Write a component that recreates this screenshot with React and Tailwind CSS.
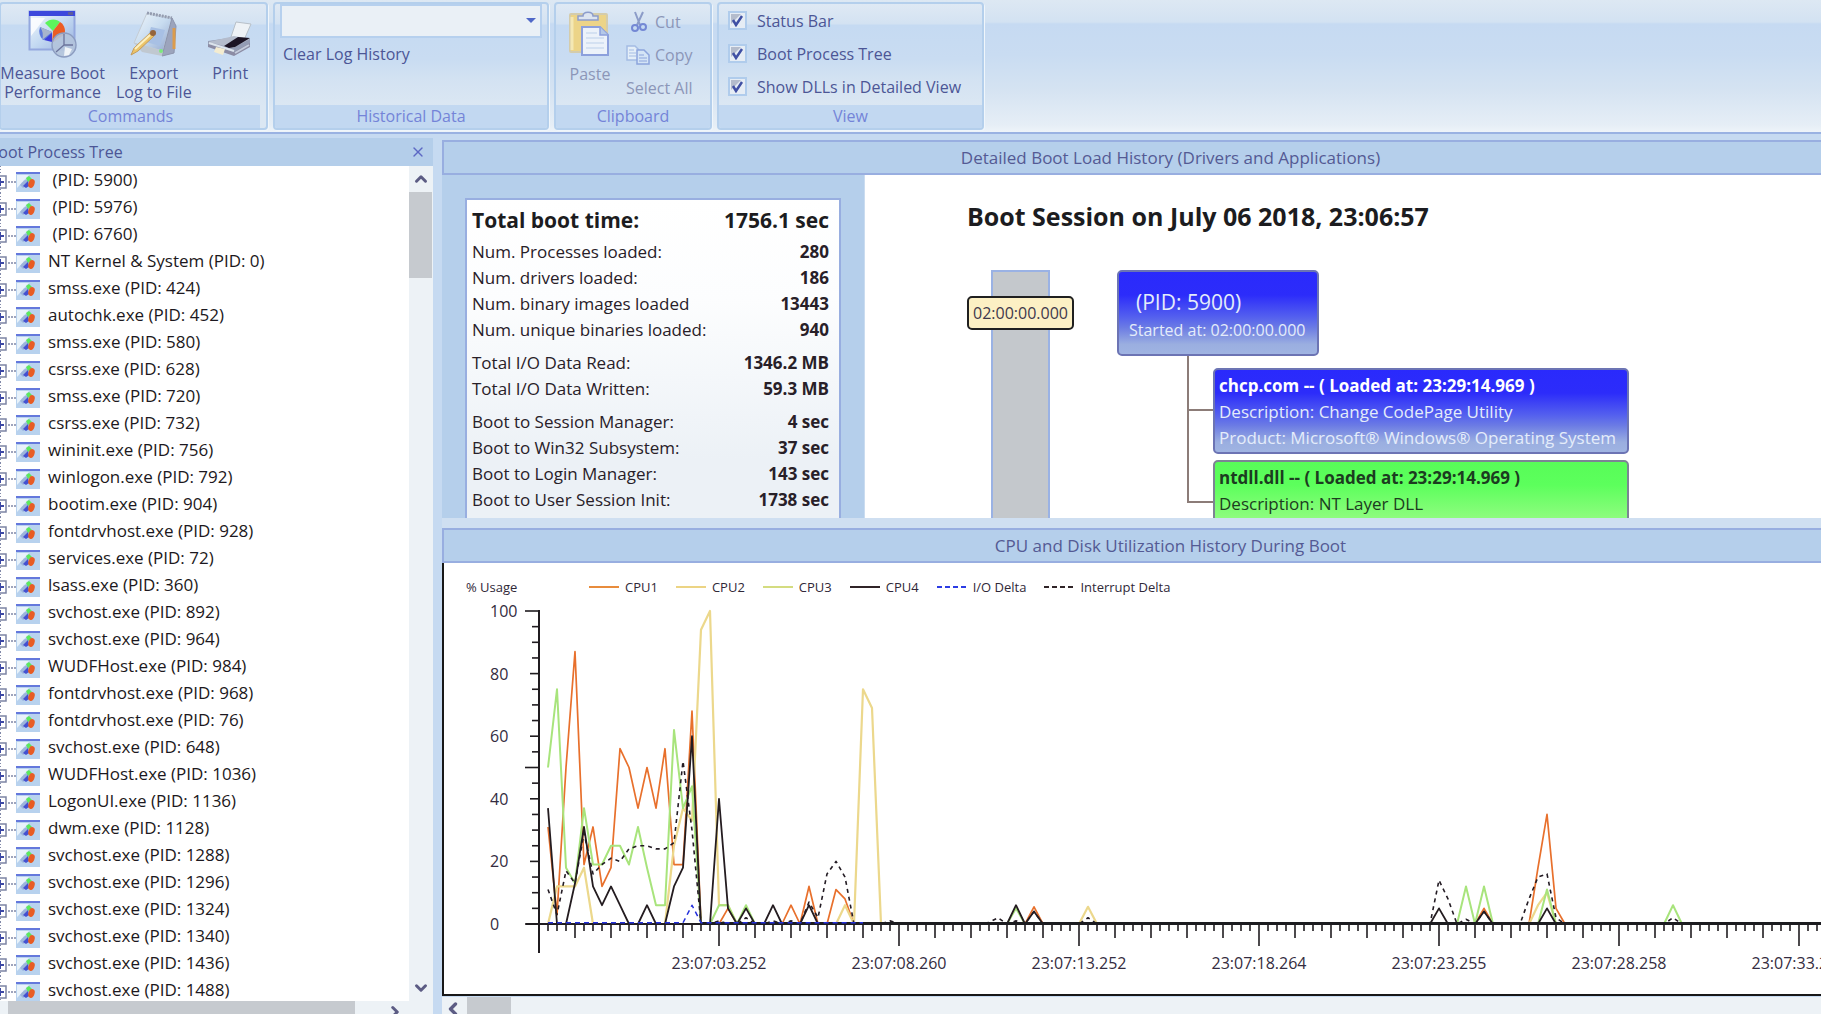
import React from "react";
import { X, ChevronUp, ChevronDown, ChevronLeft, ChevronRight } from "lucide-react";

const processes = [
  "\u00a0(PID: 5900)", "\u00a0(PID: 5976)", "\u00a0(PID: 6760)", "NT Kernel & System (PID: 0)",
  "smss.exe (PID: 424)", "autochk.exe (PID: 452)", "smss.exe (PID: 580)", "csrss.exe (PID: 628)",
  "smss.exe (PID: 720)", "csrss.exe (PID: 732)", "wininit.exe (PID: 756)", "winlogon.exe (PID: 792)",
  "bootim.exe (PID: 904)", "fontdrvhost.exe (PID: 928)", "services.exe (PID: 72)", "lsass.exe (PID: 360)",
  "svchost.exe (PID: 892)", "svchost.exe (PID: 964)", "WUDFHost.exe (PID: 984)", "fontdrvhost.exe (PID: 968)",
  "fontdrvhost.exe (PID: 76)", "svchost.exe (PID: 648)", "WUDFHost.exe (PID: 1036)", "LogonUI.exe (PID: 1136)",
  "dwm.exe (PID: 1128)", "svchost.exe (PID: 1288)", "svchost.exe (PID: 1296)", "svchost.exe (PID: 1324)",
  "svchost.exe (PID: 1340)", "svchost.exe (PID: 1436)", "svchost.exe (PID: 1488)",
];

const statGroups = [
  [
    ["Num. Processes loaded:", "280"],
    ["Num. drivers loaded:", "186"],
    ["Num. binary images loaded", "13443"],
    ["Num. unique binaries loaded:", "940"],
  ],
  [
    ["Total I/O Data Read:", "1346.2 MB"],
    ["Total I/O Data Written:", "59.3 MB"],
  ],
  [
    ["Boot to Session Manager:", "4 sec"],
    ["Boot to Win32 Subsystem:", "37 sec"],
    ["Boot to Login Manager:", "143 sec"],
    ["Boot to User Session Init:", "1738 sec"],
  ],
];

/* ---------- icons ---------- */

function MeasureIcon() {
  return (
    <svg width="50" height="50" viewBox="0 0 50 50" aria-hidden="true">
      <defs>
        <linearGradient id="mWin" x1="0" y1="0" x2="1" y2="1">
          <stop offset="0" stopColor="#f4f8fc" />
          <stop offset="0.5" stopColor="#c4daf2" />
          <stop offset="1" stopColor="#98b0e0" />
        </linearGradient>
      </defs>
      <rect x="1.5" y="1.5" width="45" height="38" fill="url(#mWin)" stroke="#94a8de" strokeWidth="2" />
      <rect x="1" y="1" width="46" height="5" fill="#3c48dc" />
      <rect x="40" y="2" width="5" height="3" fill="#5c5c9c" />
      <path d="M3 8h14L3 26z" fill="#fff" opacity="0.8" />
      <path d="M24 22L12 17a13 13 0 0 0 3 13l9-3z" fill="#5c78dc" />
      <path d="M24 22L12 17a14 14 0 0 1 2 13z" fill="#a8b4cc" />
      <path d="M25 21L17 13c5-5 12-4 15-1z" fill="#5cf45c" />
      <path d="M25 21l7-9c5 3 6 9 4 13l-12 8z" fill="#ec5c24" />
      <path d="M24 23v9l-8-2z" fill="#3c3cdc" />
      <circle cx="36" cy="35" r="12" fill="#b4c4dc" fillOpacity="0.9" stroke="#8c9cc0" strokeWidth="1.4" />
      <path d="M36 35V24M36 35h9M36 35l-8 7" stroke="#6c749c" strokeWidth="1.3" />
      <path d="M37 37l7 2-3 6-5 1z" fill="#f0f4f8" />
    </svg>
  );
}

function ExportIcon() {
  return (
    <svg width="50" height="50" viewBox="0 0 50 50" aria-hidden="true">
      <defs>
        <linearGradient id="eTop" x1="0" y1="0" x2="1" y2="1">
          <stop offset="0" stopColor="#f0f6fa" />
          <stop offset="0.5" stopColor="#c8dcf0" />
          <stop offset="1" stopColor="#90a4cc" />
        </linearGradient>
      </defs>
      <path d="M18 3L43 8 34 41 5 33z" fill="url(#eTop)" stroke="#c4ccd4" />
      <path d="M18 3L43 8" stroke="#949cb0" strokeWidth="3" strokeDasharray="2 1" />
      <path d="M43 8l4 8-2 27-12 3z" fill="#9ca4bc" stroke="#8c94ac" />
      <path d="M45 18v21" stroke="#dc9c4c" strokeWidth="3" />
      <path d="M5 33l29 8-1 5-20-4z" fill="#c0c8d0" />
      <path d="M22 17l14 3-5 16-14-4z" fill="#a8c0e4" />
      <circle cx="32" cy="41" r="2" fill="#7ce87c" />
      <path d="M2 45l3-7L21 23l4 3L9 41z" fill="#ecc468" stroke="#c49c5c" strokeWidth="1" />
      <path d="M6 39l15-14" stroke="#fcf0c0" strokeWidth="2" />
      <circle cx="24" cy="23" r="3" fill="#94643c" />
    </svg>
  );
}

function PrintIcon() {
  return (
    <svg width="48" height="50" viewBox="0 0 48 50" aria-hidden="true">
      <path d="M30 12l15 2-7 16-13-3z" fill="#eef2f6" stroke="#b8c0c8" />
      <path d="M30 27l14 2v7L28 45 2 36v-5z" fill="#949cb4" />
      <path d="M2 32l26-6 16 3-17 9z" fill="#b4bccc" />
      <path d="M18 36l14-9 12 1-15 9-6 1z" fill="#1c1424" />
      <path d="M2 34l26 8 16-9v4L28 46 2 37z" fill="#8c8ca4" />
      <path d="M3 33l25 8" stroke="#dce4ec" strokeWidth="2" />
      <path d="M10 37l9 2-2 6-9-3z" fill="#f4ecd0" />
      <path d="M29 43l14-8" stroke="#c4ccdc" strokeWidth="2" />
    </svg>
  );
}

function PasteIcon() {
  return (
    <svg width="42" height="46" viewBox="0 0 42 46" aria-hidden="true">
      <rect x="1" y="3" width="37" height="38" rx="1" fill="#ecd488" stroke="#d4ccac" strokeWidth="2" />
      <path d="M3 6v33" stroke="#f4e8b4" strokeWidth="3" />
      <path d="M9 9V5h5c0-5 10-5 10 0h5v4z" fill="#dce4f0" stroke="#8c9ccc" strokeWidth="1.5" />
      <path d="M13 16h18l8 8v20H13z" fill="#ecf2fa" stroke="#8ca0dc" strokeWidth="2" />
      <path d="M31 16v8h8" fill="#b4c8e8" stroke="#8ca0dc" strokeWidth="1.5" />
      <path d="M17 22h11M17 27h18M17 32h18M17 37h18" stroke="#ccdcf0" strokeWidth="1.5" />
    </svg>
  );
}

function CutIcon() {
  return (
    <svg width="18" height="22" viewBox="0 0 18 22" aria-hidden="true" fill="none">
      <path d="M5 1l5 13M13 1L7 14" stroke="#8c9cc8" strokeWidth="2" />
      <circle cx="5" cy="17" r="3" stroke="#7488d4" strokeWidth="2" />
      <circle cx="13" cy="16" r="3" stroke="#7488d4" strokeWidth="2" />
    </svg>
  );
}

function CopyIcon() {
  return (
    <svg width="24" height="20" viewBox="0 0 24 20" aria-hidden="true">
      <path d="M1 1h8l4 4v10H1z" fill="#e4eef8" stroke="#a4bce4" strokeWidth="1.5" />
      <path d="M3 5h5M3 8h7M3 11h7" stroke="#a4bce4" />
      <path d="M11 5h7l5 5v9H11z" fill="#d4e4f6" stroke="#8ca4dc" strokeWidth="1.5" />
      <path d="M13 10h5M13 13h8M13 16h8" stroke="#8ca4dc" />
    </svg>
  );
}

function ProcessIcon() {
  return (
    <svg className="shrink-0" width="24" height="20" viewBox="0 0 24 20" aria-hidden="true">
      <rect width="24" height="20" fill="#b8d2ee" />
      <path d="M1 3h12L1 16z" fill="#e8f2fa" />
      <rect width="24" height="2" fill="#6478dc" />
      <path d="M4 13q4-6 9-6l-1 6-5 3z" fill="#9cb4dc" />
      <path d="M10 6l3-2 3 3-4 3z" fill="#5ce85c" />
      <path d="M7 14l5-5 1 5-3 2z" fill="#4450d0" />
      <ellipse cx="15.500" cy="11.500" rx="3" ry="4.500" transform="rotate(20 15.500 11.500)" fill="#e85c24" />
    </svg>
  );
}

/* ---------- ribbon ---------- */

function RibbonGroup({ title, className, children }) {
  return (
    <section
      className={
        "flex flex-col shrink-0 rounded-[4px] border-2 border-[#b4cfec] shadow-[1px_1px_0_#f0f6fb] overflow-hidden bg-[linear-gradient(#dfe9f4_0px,#d3e2f2_20px,#c5daf2_21px,#c9dcf2_55px,#d3e2f2_75px,#dbe7f3_102px)] " +
        className
      }
    >
      <div className="flex-1">{children}</div>
      <h2 className="h-[23px] bg-[#c2d8f1] text-center text-base leading-[23px] font-medium text-[#7484d8]">{title}</h2>
    </section>
  );
}

function BigButton({ icon, lines, className }) {
  return (
    <button type="button" className={"flex flex-col items-center text-base leading-[19px] font-medium whitespace-nowrap " + className}>
      <span className="flex h-[54px] items-start justify-center">{icon}</span>
      {lines.map((l) => (
        <span key={l}>{l}</span>
      ))}
    </button>
  );
}

function ViewOption({ label }) {
  return (
    <label className="flex h-[33px] items-center gap-[10px] whitespace-nowrap">
      <span className="grid size-[19px] place-items-center">
        <input type="checkbox" defaultChecked className="peer col-start-1 row-start-1 size-[19px] appearance-none border-2 border-[#b0ccec] bg-[#e6edf5]" />
        <svg className="pointer-events-none col-start-1 row-start-1 hidden peer-checked:block" width="13" height="13" viewBox="0 0 13 13" aria-hidden="true">
          <path d="M0 0h10L0 10z" fill="#b4bccc" />
          <path d="M2 6l3 5 6-9" fill="none" stroke="#4050a4" strokeWidth="2.500" />
        </svg>
      </span>
      <span>{label}</span>
    </label>
  );
}

function Ribbon() {
  return (
    <header className="h-[134px] shrink-0 border-b-2 border-[#9ab2e2] bg-[linear-gradient(#dde8f3_0px,#d3e2f2_22px,#c6daf2_24px,#c9dcf2_55px,#d5e3f2_90px,#e6eef6_125px,#eef4f9_132px)] text-[#4c5696]">
      <div className="flex h-[130px] gap-[5px] pt-[2px]">
        <RibbonGroup title="Commands" className="w-[269px] -ml-px pr-[6px]">
          <div className="flex pt-[6px]">
            <BigButton icon={<MeasureIcon />} lines={["Measure Boot", "Performance"]} className="-ml-[3px] w-[110px]" />
            <BigButton icon={<ExportIcon />} lines={["Export", "Log to File"]} className="w-[94px]" />
            <BigButton icon={<PrintIcon />} lines={["Print"]} className="w-[60px]" />
          </div>
        </RibbonGroup>
        <RibbonGroup title="Historical Data" className="w-[276px]">
          <div className="flex flex-col items-start px-[5px]">
            <div className="relative w-full">
              <select aria-label="Log history" className="block h-[34px] w-full appearance-none border-2 border-[#b6d0ee] bg-[#eaf0f6]" />
              <svg className="pointer-events-none absolute top-[13px] right-[6px]" width="10" height="7" viewBox="0 0 10 7" aria-hidden="true">
                <path d="M0 1h10L5 6z" fill="#5068c8" />
              </svg>
            </div>
            <button type="button" className="mt-[5px] ml-[3px] text-base leading-[22px] font-medium">Clear Log History</button>
          </div>
        </RibbonGroup>
        <RibbonGroup title="Clipboard" className="w-[158px]">
          <div className="flex gap-[12px] pt-[7px] pl-[13px] text-[#8c96b8]">
            <BigButton icon={<PasteIcon />} lines={["Paste"]} className="w-[42px]" />
            <div className="flex flex-col items-start pl-[3px] text-base font-medium whitespace-nowrap">
              <button type="button" className="-mt-[6px] flex h-[33px] items-center gap-[7px] pl-[4px]"><CutIcon />Cut</button>
              <button type="button" className="flex h-[33px] items-center gap-[5px]"><CopyIcon />Copy</button>
              <button type="button" className="flex h-[33px] items-center">Select All</button>
            </div>
          </div>
        </RibbonGroup>
        <RibbonGroup title="View" className="w-[267px]">
          <div className="pl-[9px] text-base font-medium">
            <ViewOption label="Status Bar" />
            <ViewOption label="Boot Process Tree" />
            <ViewOption label="Show DLLs in Detailed View" />
          </div>
        </RibbonGroup>
      </div>
    </header>
  );
}

/* ---------- process tree ---------- */

function TreeRow({ label }) {
  return (
    <li className="flex h-[27px] items-center">
      <button type="button" aria-label={"Expand " + label} className="h-[27px] w-[16px] shrink-0">
        <svg width="16" height="27" viewBox="0 0 16 27" aria-hidden="true">
          <path d="M0 0v9M0 23v4" stroke="#8088a8" strokeWidth="2" strokeDasharray="1 2" />
          <rect x="-6" y="10" width="12" height="12" fill="#fff" stroke="#7c84a4" strokeWidth="1.500" />
          <path d="M-3 16H4M0 12v8" stroke="#3c48a4" strokeWidth="2" />
          <path d="M8 16h8" stroke="#8088a8" strokeWidth="1.500" strokeDasharray="2 1" />
        </svg>
      </button>
      <span className="mt-[4px]"><ProcessIcon /></span>
      <span className="ml-[8px] text-[17px] leading-[24px] whitespace-nowrap text-[#1c1820]">{label}</span>
    </li>
  );
}

function TreePane() {
  return (
    <aside className="flex w-[433px] shrink-0 flex-col pt-[4px]">
      <div className="flex h-[28px] items-center justify-between bg-[#b4ceea] pr-[7px] text-[#4c5696]">
        <h2 className="-ml-[12px] text-base leading-[20px] font-medium">Boot Process Tree</h2>
        <button type="button" aria-label="Close"><X size={16} strokeWidth={2} color="#5c68c4" /></button>
      </div>
      <div className="flex min-h-0 flex-1">
        <ul className="min-w-0 flex-1 overflow-hidden bg-white">
          {processes.map((p, i) => (
            <TreeRow key={i} label={p} />
          ))}
        </ul>
        <div className="flex w-[24px] flex-col items-center bg-[#edf2f6] pb-[4px]">
          <ChevronUp className="my-[4px]" size={18} strokeWidth={4} color="#5c5c84" />
          <div className="mr-px h-[86px] w-[23px] bg-[#c6cacf]" />
          <ChevronDown className="mt-auto" size={18} strokeWidth={4} color="#5c5c84" />
        </div>
      </div>
      <div className="flex h-[13px] shrink-0 overflow-hidden bg-[#edf2f6]">
        <div className="ml-[8px] h-full w-[347px] bg-[#c6cacf]" />
        <ChevronRight className="ml-[31px] mt-[2px]" size={18} strokeWidth={4} color="#5c5c84" />
      </div>
    </aside>
  );
}

/* ---------- boot history ---------- */

function PaneTitle({ children }) {
  return (
    <h2 className="h-[35px] shrink-0 border-2 border-r-0 border-[#98aee0] bg-[#b5cfeb] pl-[76px] text-center text-[17px] leading-[31px] text-[#545a94]">
      {children}
    </h2>
  );
}

function Summary() {
  return (
    <div className="w-[423px] shrink-0 overflow-hidden border-r border-[#cadcf0] bg-[#b5cfeb] pt-[23px] pr-[23px] pl-[23px]">
      <table className="w-full border-2 border-[#98aee0] bg-[linear-gradient(#ffffff_0px,#fcfdfe_100px,#ecf1f6_260px)] text-[#282028]">
        <tbody>
          <tr className="h-[40px] text-[21px] leading-[30px] font-bold text-[#1c1c20]">
            <th scope="row" className="pl-[5px] text-left">Total boot time:</th>
            <td className="pr-[10px] text-right">1756.1 sec</td>
          </tr>
        </tbody>
        {statGroups.map((g, i) => (
          <tbody key={i}>
            {g.map(([k, v]) => (
              <tr key={k} className="h-[26px] text-[17px] leading-[22px]">
                <th scope="row" className="pl-[5px] text-left font-normal">{k}</th>
                <td className="pr-[10px] text-right font-bold">{v}</td>
              </tr>
            ))}
            <tr className="h-[7px]" aria-hidden="true"><td colSpan={2} /></tr>
          </tbody>
        ))}
        <tbody aria-hidden="true">
          <tr className="h-[20px]"><td colSpan={2} /></tr>
        </tbody>
      </table>
    </div>
  );
}

const blueNode = "bg-[linear-gradient(#2a2afc_0%,#2c2cfa_28%,#5460ee_55%,#6c7ce4_68%,#9aaee0_88%,#a0b4e2_100%)] text-[#e4ecfa]";
const greenNode = "bg-[linear-gradient(#58fc58_0%,#5cff5c_28%,#90fc80_70%,#c0f8b0_100%)] text-[#1c3c20]";

function BootSession() {
  return (
    <div className="min-w-0 flex-1 overflow-hidden bg-white pl-[102px]">
      <h3 className="pt-[25px] text-[25px] leading-[32px] font-bold whitespace-nowrap text-[#1c1c20]">Boot Session on July 06 2018, 23:06:57</h3>
      <div className="mt-[38px] flex items-start">
        <div className="flex h-[300px] w-[107px] shrink-0 flex-col items-center">
          <div className="h-[26px] w-[59px] border-2 border-b-0 border-[#9ab2e4] bg-[#c4c8cc]" />
          <div className="w-full rounded-[5px] border-2 border-[#202020] bg-[#fcf0c4] text-center text-base leading-[30px] text-[#40384c]">02:00:00.000</div>
          <div className="w-[59px] flex-1 border-2 border-t-0 border-[#9ab2e4] bg-[#c4c8cc]" />
        </div>
        <div className="ml-[43px]">
          <div className={"h-[86px] w-[202px] rounded-[5px] border-2 border-[#6c74b4] pt-[15px] pl-[10px] whitespace-nowrap " + blueNode}>
            <div className="pl-[7px] text-[21px] leading-[30px]">(PID: 5900)</div>
            <div className="text-base leading-[26px]">Started at: 02:00:00.000</div>
          </div>
          <ul className="ml-[70px] whitespace-nowrap">
            <li className="flex border-l-2 border-[#8c7c78] pt-[12px]">
              <div className="mt-[41px] h-[2px] w-[24px] bg-[#8c7c78]" />
              <div className={"h-[86px] w-[416px] rounded-[5px] border-2 border-[#6c74b4] pt-[3px] pl-[4px] text-[17px] leading-[26px] " + blueNode}>
                <div className="font-bold text-white">chcp.com -- ( Loaded at: 23:29:14.969 )</div>
                <div>Description: Change CodePage Utility</div>
                <div>Product: Microsoft® Windows® Operating System</div>
              </div>
            </li>
            <li className="flex">
              <div className="h-[49px] w-[26px] border-b-2 border-l-2 border-[#8c7c78]" />
              <div className={"mt-[6px] h-[86px] w-[416px] rounded-[5px] border-2 border-[#7c8494] pt-[3px] pl-[4px] text-[17px] leading-[26px] " + greenNode}>
                <div className="font-bold">ntdll.dll -- ( Loaded at: 23:29:14.969 )</div>
                <div>Description: NT Layer DLL</div>
              </div>
            </li>
          </ul>
        </div>
      </div>
    </div>
  );
}

/* ---------- utilisation chart ---------- */

const px = (k) => 95 + 9 * k;
const py = (v) => 329 - 3.13 * v;
const points = (pairs) => pairs.map(([k, v]) => px(k) + "," + py(v)).join(" ");
const seq = (start, values) => values.map((v, i) => [start + i, v]);

const cpu1 = [
  ...seq(1, [31, 3, 50, 87, 19, 31, 12, 18, 56, 50, 37, 50, 37, 56, 19, 19, 68, 0, 0, 0, 5, 0]),
  ...seq(27, [0, 6, 0, 12, 0, 0, 11, 8, 0]),
  ...seq(54, [0, 5.5, 0]), ...seq(104, [0, 5, 0]), ...seq(110, [0, 18, 35, 5, 0]),
];
const cpu2 = [
  ...seq(1, [0, 12, 12, 12, 18, 0]), ...seq(14, [0, 25, 37, 33, 94, 100, 6, 6, 0]),
  ...seq(33, [0, 6, 0, 75, 69, 0]), ...seq(60, [0, 5.5, 0]), ...seq(110, [0, 6, 10, 0]),
];
const cpu3 = [
  ...seq(1, [50, 75, 18, 13, 37, 19, 19, 25, 25, 19, 31, 18, 6, 6, 62, 37, 44, 0, 0, 6, 6, 0, 6, 0]),
  ...seq(52, [0, 5, 0]), ...seq(102, [0, 12, 0, 12, 0]), ...seq(111, [0, 11, 0]), ...seq(125, [0, 6, 0]),
];
const cpu4 = [
  ...seq(1, [37, 0, 0, 13, 31, 12, 6, 12, 6, 0, 0, 6, 0, 0, 12, 18, 60, 0, 0, 40, 5, 0, 5, 0, 0, 6, 0]),
  ...seq(29, [0, 6, 0]), ...seq(52, [0, 6, 0, 4, 0]), ...seq(99, [0, 5, 0]), ...seq(104, [0, 4, 0]), ...seq(111, [0, 5, 0]),
];
const ioDelta = [...seq(1, [0.4, 0.4]), ...seq(16, [0.4, 6, 0.4]), [36, 0.4]];
const interrupts = [
  ...seq(1, [11, 3, 17, 13, 29, 16, 19, 21, 20, 24, 25, 25, 24, 24, 26, 52, 30, 0, 0, 1, 0, 0, 2, 0, 0, 1, 0, 1, 0, 7, 2, 16, 20, 15, 0]),
  ...seq(38, [0, 1, 0]), ...seq(49, [0, 0.5, 2, 0, 1, 0, 4, 0]), ...seq(60, [0, 2, 0]),
  ...seq(99, [0, 14, 8, 0, 1.5, 0, 4, 0]), ...seq(109, [0, 8, 15, 16, 2, 0]), ...seq(125, [0, 2, 0]),
];

const timeLabels = ["23:07:03.252", "23:07:08.260", "23:07:13.252", "23:07:18.264", "23:07:23.255", "23:07:28.258", "23:07:33.261"];

const legend = [
  ["CPU1", "#e88c3c", false], ["CPU2", "#ecd484", false], ["CPU3", "#d4dc80", false],
  ["CPU4", "#302428", false], ["I/O Delta", "#2c3ce4", true], ["Interrupt Delta", "#302428", true],
];

function Chart() {
  const xTicks = Array.from({ length: 150 }, (_, i) => i + 1);
  const yTicks = Array.from({ length: 21 }, (_, i) => i * 5);
  return (
    <div className="min-h-0 flex-1 overflow-hidden border-b-2 border-l-2 border-[#181818] bg-white">
      <div className="mt-[16px] flex h-[16px] items-center pl-[22px] text-[13px] leading-[16px] whitespace-nowrap text-[#302838]">
        <span className="w-[123px]">% Usage</span>
        {legend.map(([name, color, dashed]) => (
          <span key={name} className="mr-[18px] flex items-center gap-[6px]">
            <svg width="30" height="2" aria-hidden="true">
              <path d="M0 1h30" stroke={color} strokeWidth="2" strokeDasharray={dashed ? "5 3" : undefined} />
            </svg>
            {name}
          </span>
        ))}
      </div>
      <svg className="block h-[396px] w-full" role="img" aria-label="CPU and disk utilization chart">
        <g fill="none" strokeWidth="2" strokeLinejoin="round">
          <polyline points={points(cpu1)} stroke="#e8702c" strokeWidth="1.700" />
          <polyline points={points(cpu2)} stroke="#ecd88c" strokeWidth="2.200" />
          <polyline points={points(cpu3)} stroke="#a8e47c" />
          <polyline points={points(cpu4)} stroke="#241c20" strokeWidth="1.800" />
          <polyline points={points(interrupts)} stroke="#241c24" strokeWidth="1.600" strokeDasharray="4 4" />
          <path d={"M82 329H" + px(19)} stroke="#201c20" />
          <path d={"M" + px(18) + " 328.500H" + px(400)} stroke="#1c1c20" strokeWidth="3" />
          <polyline points={points(ioDelta)} stroke="#2430dc" strokeWidth="1.500" strokeDasharray="5 4" />
        </g>
        <g stroke="#201c20" strokeWidth="1.600">
          <path d="M95 15V358" strokeWidth="2" />
          {yTicks.map((v) => (
            <path key={v} d={"M" + (v % 50 === 0 ? 81 : v % 20 === 0 ? 86 : 88) + " " + py(v) + "H95"} />
          ))}
          {xTicks.map((k) => (
            <path key={k} d={"M" + px(k) + " 329v" + (k % 20 === 0 ? 22 : k % 4 === 0 ? 14 : 7)} />
          ))}
        </g>
        <g className="text-base" fill="#342c40">
          {[0, 20, 40, 60, 80, 100].map((v) => (
            <text key={v} x="46" y={py(v) + 6}>{v}</text>
          ))}
          {timeLabels.map((t, i) => (
            <text key={t} x={px(20 * (i + 1))} y="374" textAnchor="middle">{t}</text>
          ))}
        </g>
      </svg>
    </div>
  );
}

export default function App() {
  return (
    <div className="flex h-screen flex-col overflow-hidden bg-[#c6daf1] font-['Open_Sans','Noto_Sans',sans-serif]">
      <Ribbon />
      <div className="flex min-h-0 flex-1">
        <TreePane />
        <main className="ml-[9px] flex min-w-0 flex-1 flex-col pt-[6px]">
          <PaneTitle>Detailed Boot Load History (Drivers and Applications)</PaneTitle>
          <div className="flex h-[343px] shrink-0">
            <Summary />
            <BootSession />
          </div>
          <div className="h-[10px] shrink-0 bg-[#cfdff1]" />
          <PaneTitle>CPU and Disk Utilization History During Boot</PaneTitle>
          <Chart />
          <div className="mt-px flex h-[17px] shrink-0 overflow-hidden bg-[#edf2f6]">
            <ChevronLeft className="ml-px mt-[2px]" size={20} strokeWidth={4} color="#5c5c84" />
            <div className="ml-[4px] h-full w-[44px] bg-[#c6cacf]" />
          </div>
        </main>
      </div>
    </div>
  );
}
